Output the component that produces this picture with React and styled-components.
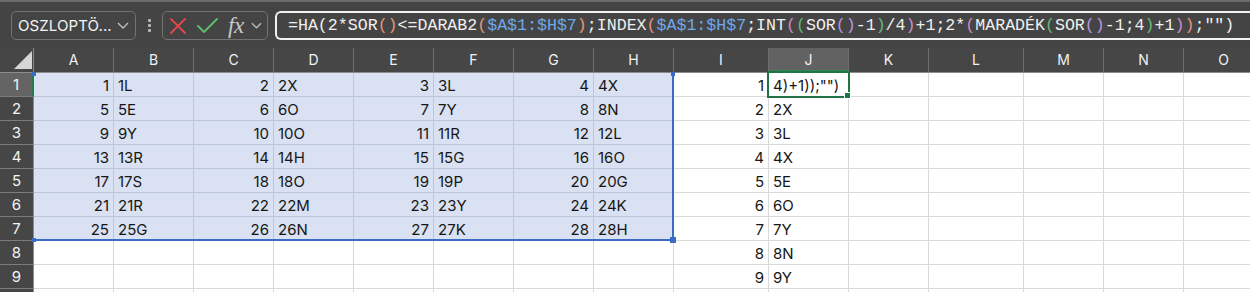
import React from 'react';
import styled, { createGlobalStyle } from 'styled-components';

const GlobalStyle = createGlobalStyle`
  html, body { margin: 0; padding: 0; background: #ffffff; overflow: hidden; }
  body { font-family: Inter, "Noto Sans", sans-serif; }
`;

const Page = styled.div`
  width: 1250px;
  height: 292px;
  overflow: hidden;
  display: flex;
  flex-direction: column;
`;

const Toolbar = styled.div`
  flex: none;
  height: 48px;
  box-sizing: border-box;
  background: #444444;
  border-top: 2px solid #6c6c6c;
  display: flex;
  align-items: flex-start;
  padding: 9px 0 0 11px;
`;

const NameBox = styled.div`
  width: 125px;
  height: 29px;
  box-sizing: border-box;
  border: 1px solid #737373;
  border-radius: 5px;
  display: flex;
  align-items: center;
  justify-content: space-between;
  padding: 0 6px 0 6px;
  color: #f4f4f4;
  font-size: 15px;
  letter-spacing: 0.1px;
`;

const Dots = styled.div`
  margin: 8px 0 0 12px;
  display: flex;
  flex-direction: column;
  gap: 2px;
  span {
    width: 3px;
    height: 3px;
    border-radius: 1px;
    background: #b8b8b8;
  }
`;

const FxGroup = styled.div`
  margin-left: 11px;
  width: 106px;
  height: 29px;
  box-sizing: border-box;
  border: 1px solid #737373;
  border-radius: 5px;
  display: flex;
  align-items: center;
  padding-left: 7px;
`;

const Slot = styled.span`
  display: flex;
  align-items: center;
  margin-left: ${(p) => p.$ml || 0}px;
`;

const FxText = styled.span`
  font-family: "Liberation Serif", "DejaVu Serif", serif;
  font-style: italic;
  font-size: 23px;
  line-height: 22px;
  color: #c9c9c9;
  letter-spacing: -0.5px;
`;

const FormulaBox = styled.div`
  margin-left: 7px;
  flex: 1;
  height: 29px;
  box-sizing: border-box;
  border: 2px solid #f2f2f2;
  border-right: none;
  border-radius: 6px 0 0 6px;
  padding-left: 11px;
  display: flex;
  align-items: center;
  white-space: nowrap;
  overflow: hidden;
  font-family: "Liberation Mono", "DejaVu Sans Mono", monospace;
  font-size: 16.6px;
  color: #f0f0f0;
`;

const Tok = styled.span`
  color: ${(p) => p.$c || '#f0f0f0'};
`;

const Sheet = styled.div`
  position: relative;
  flex: 1;
  overflow: hidden;
`;

const HeaderRow = styled.div`
  display: flex;
  height: 25px;
  box-sizing: border-box;
  background: #464646;
  border-bottom: 1px solid #8c8c8c;
`;

const Corner = styled.div`
  flex: none;
  width: 34px;
  box-sizing: border-box;
  border-right: 1px solid #8c8c8c;
  display: flex;
  align-items: flex-end;
  justify-content: flex-end;
  padding: 0 1px 3px 0;
`;

const ColHead = styled.div`
  flex: none;
  width: ${(p) => p.$w}px;
  box-sizing: border-box;
  border-right: 1px solid #6e6e6e;
  border-bottom: ${(p) => (p.$active ? '2px solid #2b8a55' : 'none')};
  background: ${(p) => (p.$active ? '#626262' : 'transparent')};
  color: #f2f2f2;
  font-size: 14px;
  line-height: 24px;
  text-align: center;
`;

const Row = styled.div`
  display: flex;
  height: 24px;
`;

const RowHead = styled.div`
  flex: none;
  width: 34px;
  box-sizing: border-box;
  background: ${(p) => (p.$active ? '#646464' : '#464646')};
  border-right: ${(p) => (p.$active ? '2px solid #237a4b' : '1px solid #8c8c8c')};
  border-bottom: 1px solid #7c7c7c;
  color: #f4f4f4;
  font-size: 15px;
  line-height: 23px;
  text-align: center;
`;

const Cell = styled.div`
  flex: none;
  width: ${(p) => p.$w}px;
  box-sizing: border-box;
  background: ${(p) => (p.$sel ? '#d9e1f2' : '#ffffff')};
  border-right: 1px solid ${(p) => (p.$sel ? '#bcc6dc' : '#d9d9d9')};
  border-bottom: 1px solid ${(p) => (p.$sel ? '#bcc6dc' : '#d9d9d9')};
  color: #161616;
  font-size: 15px;
  line-height: 23px;
  padding: 1px 4px 0 4px;
  text-align: ${(p) => (p.$num ? 'right' : 'left')};
  white-space: nowrap;
  overflow: hidden;
`;

const RangeBox = styled.div`
  position: absolute;
  left: 34px;
  top: 25px;
  width: 640px;
  height: 168px;
  box-sizing: border-box;
  border-right: 2px solid #3a6cc6;
  border-bottom: 2px solid #3a6cc6;
  pointer-events: none;
`;

const Handle = styled.div`
  position: absolute;
  left: ${(p) => p.$x}px;
  top: ${(p) => p.$y}px;
  width: ${(p) => p.$s}px;
  height: ${(p) => p.$s}px;
  background: ${(p) => p.$c};
  box-sizing: border-box;
  outline: ${(p) => (p.$ring ? '1px solid #ffffff' : 'none')};
`;

const ActiveBox = styled.div`
  position: absolute;
  left: 767px;
  top: 23px;
  width: 83px;
  height: 27px;
  box-sizing: border-box;
  border: 2px solid #1f7346;
  pointer-events: none;
`;

const Chevron = ({ w = 12 }) => (
  <svg width={w} height="7" viewBox="0 0 12 7">
    <path d="M1 1 L6 6 L11 1" fill="none" stroke="#bdbdbd" strokeWidth="1.4" />
  </svg>
);

const Cross = () => (
  <svg width="16" height="16" viewBox="0 0 16 16">
    <path d="M1 1 L15 15 M15 1 L1 15" stroke="#e2474d" strokeWidth="1.8" strokeLinecap="round" />
  </svg>
);

const Check = () => (
  <svg width="21" height="15" viewBox="0 0 21 15">
    <path d="M1 8 L7 14 L20 1" fill="none" stroke="#5dbf6a" strokeWidth="1.8" strokeLinecap="round" strokeLinejoin="round" />
  </svg>
);

const CornerMark = () => (
  <svg width="18" height="18" viewBox="0 0 18 18">
    <path d="M18 0 L18 18 L0 18 Z" fill="#d6d6d6" />
  </svg>
);

const W = '#f0f0f0';
const L1 = '#e6947b';
const L2 = '#d08acb';
const L3 = '#63bb74';
const L4 = '#b596e0';
const REF = '#6fa8ec';

const formula = [
  ['=HA(', W], ['2*SOR', W], ['()', L1], ['<=DARAB2', W], ['(', L1], ['$A$1:$H$7', REF], [')', L1],
  [';INDEX', W], ['(', L1], ['$A$1:$H$7', REF], [';INT', W], ['(', L2], ['(', L3], ['SOR', W], ['()', L4],
  ['-1', W], [')', L3], ['/4', W], [')', L2], ['+1;2*', W], ['(', L2], ['MARADÉK', W], ['(', L3],
  ['SOR', W], ['()', L4], ['-1;4', W], [')', L3], ['+1', W], [')', L2], [')', L1], [';""', W], [')', W],
];

const columns = [
  ['A', 80], ['B', 80], ['C', 80], ['D', 80], ['E', 80], ['F', 80], ['G', 80], ['H', 80],
  ['I', 95], ['J', 80], ['K', 80], ['L', 95], ['M', 80], ['N', 80], ['O', 80],
];

const letters = [
  ['L', 'X', 'L', 'X'],
  ['E', 'O', 'Y', 'N'],
  ['Y', 'O', 'R', 'L'],
  ['R', 'H', 'G', 'O'],
  ['S', 'O', 'P', 'G'],
  ['R', 'M', 'Y', 'K'],
  ['G', 'N', 'K', 'H'],
];

const jValues = ['4)+1));"")', '2X', '3L', '4X', '5E', '6O', '7Y', '8N', '9Y', ''];

function cellContent(r, ci) {
  // r: 0-based row, ci: 0-based column
  if (r < 7 && ci < 8) {
    const pair = Math.floor(ci / 2);
    const n = r * 4 + pair + 1;
    return ci % 2 === 0 ? { text: String(n), num: true } : { text: `${n}${letters[r][pair]}`, num: false };
  }
  if (ci === 8 && r < 9) return { text: String(r + 1), num: true };
  if (ci === 9) return { text: jValues[r], num: false };
  return { text: '', num: false };
}

export default function App() {
  const rows = Array.from({ length: 10 }, (_, i) => i);
  return (
    <Page>
      <GlobalStyle />
      <Toolbar>
        <NameBox>
          <span>OSZLOPTÖ...</span>
          <Chevron />
        </NameBox>
        <Dots>
          <span />
          <span />
          <span />
        </Dots>
        <FxGroup>
          <Slot><Cross /></Slot>
          <Slot $ml={11}><Check /></Slot>
          <Slot $ml={10}><FxText>fx</FxText></Slot>
          <Slot $ml={7}><Chevron w={11} /></Slot>
        </FxGroup>
        <FormulaBox>
          {formula.map(([t, c], i) => (
            <Tok key={i} $c={c}>{t}</Tok>
          ))}
        </FormulaBox>
      </Toolbar>
      <Sheet>
        <HeaderRow>
          <Corner><CornerMark /></Corner>
          {columns.map(([name, w]) => (
            <ColHead key={name} $w={w} $active={name === 'J'}>{name}</ColHead>
          ))}
        </HeaderRow>
        {rows.map((r) => (
          <Row key={r}>
            <RowHead $active={r === 0}>{r + 1}</RowHead>
            {columns.map(([name, w], ci) => {
              const c = cellContent(r, ci);
              return (
                <Cell key={name} $w={w} $sel={r < 7 && ci < 8} $num={c.num}>
                  {c.text}
                </Cell>
              );
            })}
          </Row>
        ))}
        <RangeBox />
        <Handle $x={32} $y={24} $s={4} $c="#3a6cc6" />
        <Handle $x={671} $y={24} $s={4} $c="#3a6cc6" />
        <Handle $x={32} $y={190} $s={4} $c="#3a6cc6" />
        <Handle $x={670} $y={189} $s={6} $c="#3a6cc6" />
        <ActiveBox />
        <Handle $x={845} $y={45} $s={5} $c="#1f7346" $ring />
      </Sheet>
    </Page>
  );
}
